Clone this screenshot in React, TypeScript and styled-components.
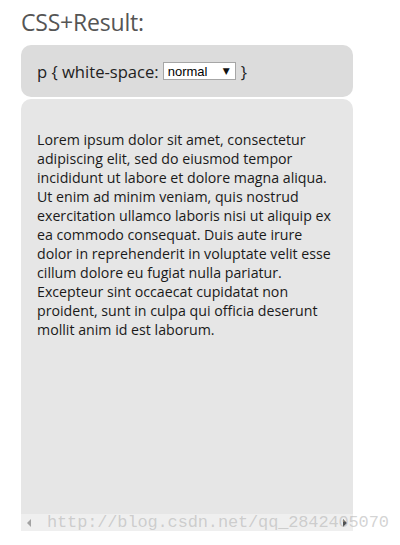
import styled, {createGlobalStyle} from "styled-components";

const Global = createGlobalStyle`
  html, body {
    margin: 0;
    padding: 0;
    background: #fff;
  }
`;

const Page = styled.div`
  position: relative;
  width: 400px;
  height: 545px;
  padding: 7px 0 0 21px;
  box-sizing: border-box;
  font-family: "Open Sans", sans-serif;
`;

const Title = styled.h2`
  margin: 0;
  font-size: 23px;
  font-weight: 400;
  line-height: 30px;
  color: #555;
  letter-spacing: -0.2px;
`;

const CssPanel = styled.div`
  display: flex;
  align-items: center;
  width: 332px;
  height: 52px;
  margin-top: 8px;
  padding: 0 16px;
  box-sizing: border-box;
  background: #dcdcdc;
  border-radius: 10px;
  font-family: "Open Sans", sans-serif;
  font-size: 16.6px;
  color: #222;
  white-space: pre;
`;

const SelectWrap = styled.span`
  position: relative;
  display: inline-flex;
  margin: 0 5px 0 4px;
`;

const Select = styled.select`
  appearance: none;
  width: 73px;
  height: 18px;
  padding: 0 0 0 4px;
  border: 1px solid #a6a6a6;
  border-radius: 0;
  background: #fff;
  font-family: "Liberation Sans", Arial, sans-serif;
  font-size: 13px;
  color: #000;
  outline: none;
`;

const Caret = styled.span`
  position: absolute;
  right: 6px;
  top: 3px;
  font-size: 9px;
  line-height: 12px;
  color: #111;
  pointer-events: none;
  font-family: "DejaVu Sans", sans-serif;
`;

const ResultPanel = styled.div`
  display: flex;
  flex-direction: column;
  width: 332px;
  height: 432px;
  margin-top: 2px;
  background: #e6e6e6;
  border-radius: 10px 10px 0 0;
  overflow: hidden;
`;

const ResultBody = styled.div`
  flex: 1;
  padding: 31px 16px 0 16px;
`;

const Text = styled.p`
  margin: 0;
  font-family: "Open Sans", sans-serif;
  font-size: 14.2px;
  line-height: 19px;
  color: #1a1a1a;
`;

const ScrollBar = styled.div`
  display: flex;
  align-items: center;
  justify-content: space-between;
  height: 17px;
  padding: 0 6px;
  background: #efefef;
`;

const Arrow = styled.span<{ $dir: "left" | "right"; $dark?: boolean }>`
  width: 0;
  height: 0;
  border-top: 4px solid transparent;
  border-bottom: 4px solid transparent;
  ${p => p.$dir === "left"
    ? `border-right: 4px solid ${p.$dark ? "#505050" : "#a3a3a3"};`
    : `border-left: 4px solid ${p.$dark ? "#505050" : "#a3a3a3"};`}
`;

const Watermark = styled.div`
  position: absolute;
  left: 47px;
  top: 513px;
  font-family: "Liberation Mono", monospace;
  font-size: 17px;
  line-height: 20px;
  color: rgba(175, 175, 175, 0.55);
  pointer-events: none;
  letter-spacing: -0.15px;
`;

const lorem = "Lorem ipsum dolor sit amet, consectetur adipiscing elit, sed do eiusmod tempor incididunt ut labore et dolore magna aliqua. Ut enim ad minim veniam, quis nostrud exercitation ullamco laboris nisi ut aliquip ex ea commodo consequat. Duis aute irure dolor in reprehenderit in voluptate velit esse cillum dolore eu fugiat nulla pariatur. Excepteur sint occaecat cupidatat non proident, sunt in culpa qui officia deserunt mollit anim id est laborum.";

export default function App() {
  return (
    <>
      <Global />
      <Page>
        <Title>CSS+Result:</Title>
        <CssPanel>
          p {"{"} white-space:
          <SelectWrap>
            <Select defaultValue="normal">
              <option value="normal">normal</option>
              <option value="nowrap">nowrap</option>
              <option value="pre">pre</option>
              <option value="pre-wrap">pre-wrap</option>
              <option value="pre-line">pre-line</option>
            </Select>
            <Caret>▼</Caret>
          </SelectWrap>
          {"}"}
        </CssPanel>
        <ResultPanel>
          <ResultBody>
            <Text>{lorem}</Text>
          </ResultBody>
          <ScrollBar>
            <Arrow $dir="left" />
            <Arrow $dir="right" $dark />
          </ScrollBar>
        </ResultPanel>
        <Watermark>http://blog.csdn.net/qq_2842405070</Watermark>
      </Page>
    </>
  );
}
